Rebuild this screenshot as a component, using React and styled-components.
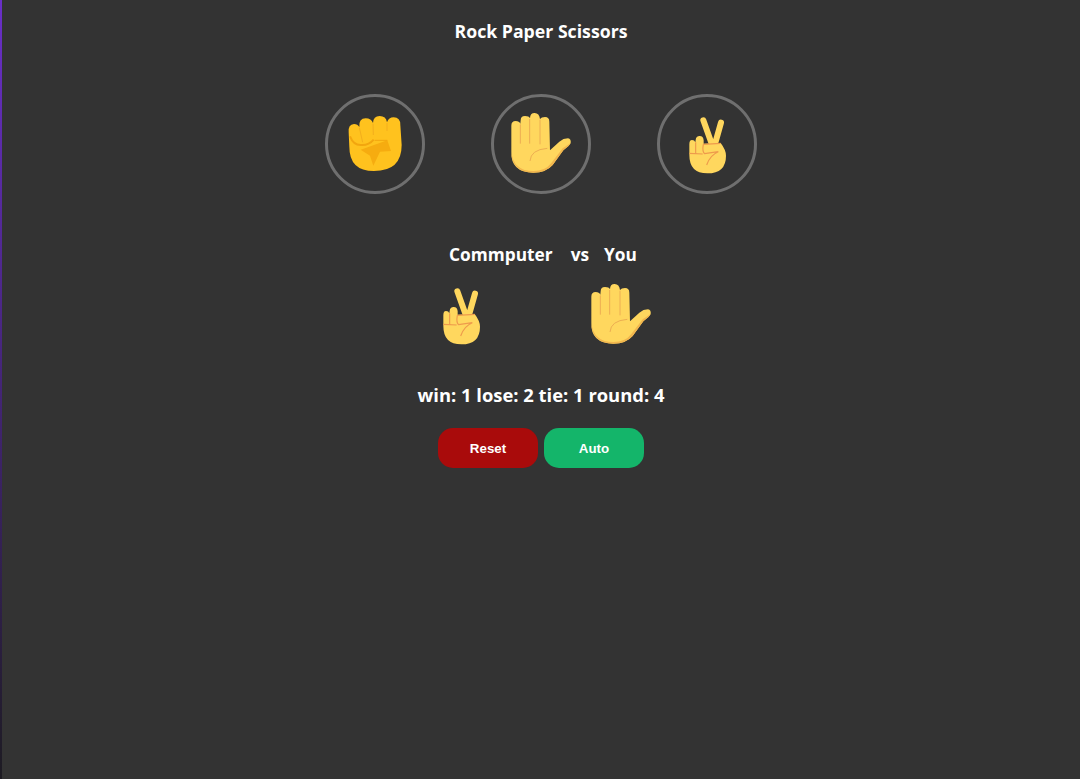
import React from "react";
import styled, { createGlobalStyle } from "styled-components";

const Global = createGlobalStyle`
  html, body { margin: 0; padding: 0; height: 100%; background: #333; }
  #root { min-height: 100vh; }
`;

const Page = styled.main`
  min-height: 779px;
  box-sizing: border-box;
  border-left: 2px solid;
  border-image: linear-gradient(180deg, #6a2fc8, #1d1b22) 1;
  background: #333;
  color: #fff;
  font-family: "Open Sans", "Noto Sans", sans-serif;
  font-weight: 700;
  display: flex;
  flex-direction: column;
  align-items: center;
  padding-top: 20px;
`;

const Title = styled.h1`
  margin: 0;
  font-size: 17.7px;
  line-height: 22px;
  font-weight: 700;
`;

const Choices = styled.div`
  display: flex;
  gap: 66px;
  margin-top: 52px;
`;

const Choice = styled.button`
  width: 100px;
  height: 100px;
  box-sizing: border-box;
  border: 3px solid #6f6f6f;
  border-radius: 50%;
  background: transparent;
  padding: 0;
  display: flex;
  align-items: center;
  justify-content: center;
`;

const Versus = styled.div`
  display: flex;
  margin-top: 49px;
  padding-left: 4px;
  font-size: 17.3px;
  line-height: 24px;
`;

const Vs = styled.span`
  margin: 0 15px 0 18px;
`;

const Picks = styled.div`
  display: flex;
  gap: 99px;
  align-items: center;
  margin-top: 17px;
`;

const Score = styled.p`
  margin: 37px 0 0;
  font-size: 18.4px;
  line-height: 24px;
`;

const Actions = styled.div`
  display: flex;
  gap: 6px;
  margin-top: 21px;
`;

const Action = styled.button`
  width: 100px;
  height: 40px;
  border: 0;
  border-radius: 15px;
  background: ${(p) => p.$bg};
  color: #fff;
  font-family: "Liberation Sans", Arial, sans-serif;
  font-size: 13.33px;
  font-weight: 700;
`;

const Fist = () => (
  <svg width="60" height="60" viewBox="105 87 180 180">
    <path fill="#FFC21E" d="M116 142 Q114 118 132 117 Q143 117 148 126 Q146 100 167 100 Q184 100 189 114 Q190 93 209 93 Q228 93 231 112 Q236 97 251 97 Q271 97 271 120 L275 180 Q275 258 192 258 Q118 258 118 185 Z" />
    <path fill="#F6AC10" d="M152 194 L232 166 L243 198 L210 200 L190 242 L180 212 Z" />
    <path fill="none" stroke="#F2A60F" strokeWidth="6" d="M120 154 Q130 180 152 180 Q176 182 191 164" />
    <path fill="none" stroke="#F3AE1C" strokeWidth="3" d="M189 116 L190 150 M231 114 L231 138 M148 128 L158 172" />
    <path fill="none" stroke="#F2A60F" strokeWidth="3" d="M194 166 L232 166" />
  </svg>
);

const Hand = () => (
  <svg width="62" height="62" viewBox="90 84 186 186">
    <path fill="#FFD75E" d="M94 122 Q94 108 107 108 Q118 108 121 116 L122 106 Q122 93 135 93 Q147 93 150 100 Q150 84 164 84 Q178 84 180 102 Q184 96 195 96 Q208 96 208 110 L210 196 L238 170 Q250 160 264 160 Q274 162 272 174 Q268 182 250 196 L218 240 Q198 263 160 263 Q92 262 94 200 Z" />
    <path fill="none" stroke="#EDAE52" strokeWidth="3" d="M121 118 L121 176 M149 102 L149 176 M180 104 L180 178 M150 228 Q152 194 202 190" />
    <path fill="#F2B64E" d="M94 200 Q96 262 160 263 Q198 263 218 240 L250 196 Q268 182 272 174 Q266 178 248 190 L214 234 Q196 258 160 258 Q100 258 94 200 Z" />
  </svg>
);

const Victory = () => (
  <svg width="60" height="60" viewBox="81 87 180 180">
    <path fill="#FFD75E" stroke="#FFD75E" strokeWidth="18" strokeLinecap="round" d="M160 106 L183 170 M213 113 L197 170" />
    <path fill="#FFD75E" d="M118 178 Q118 165 126 165 Q134 165 136 172 L137 165 Q138 153 149 153 Q160 153 161 166 L161 176 L212 174 Q228 195 228 212 Q228 265 172 265 Q118 265 118 210 Z" />
    <path fill="none" stroke="#EE9A4C" strokeWidth="3.5" d="M137 172 L137 205 M118 205 L158 207 M160 178 L212 175 M160 178 Q156 200 164 206 L205 200 Q180 210 170 240" />
  </svg>
);

export default function App() {
  return (
    <>
      <Global />
      <Page>
        <Title>Rock Paper Scissors</Title>
        <Choices>
          <Choice><Fist /></Choice>
          <Choice><Hand /></Choice>
          <Choice><Victory /></Choice>
        </Choices>
        <Versus>
          <span>Commputer</span>
          <Vs>vs</Vs>
          <span>You</span>
        </Versus>
        <Picks>
          <Victory />
          <Hand />
        </Picks>
        <Score>win: 1 lose: 2 tie: 1 round: 4</Score>
        <Actions>
          <Action $bg="#a90b0b">Reset</Action>
          <Action $bg="#14b56a">Auto</Action>
        </Actions>
      </Page>
    </>
  );
}
